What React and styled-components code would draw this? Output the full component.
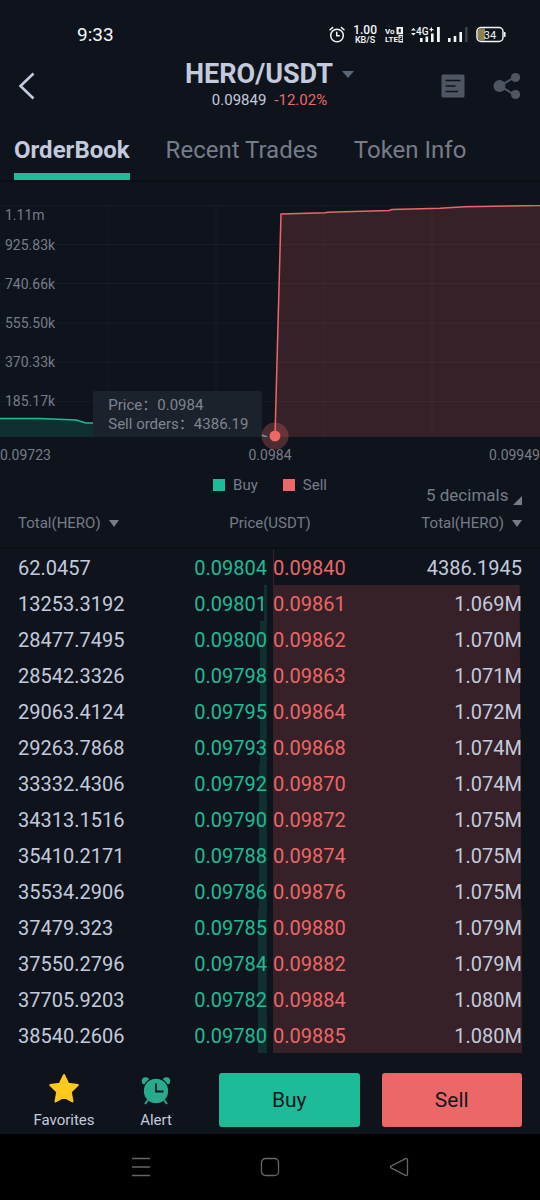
import React, { useState } from 'react';
import styled, { createGlobalStyle } from 'styled-components';

const GREEN = '#1dbb97';
const RED = '#ec6767';
const MUTED = '#767c88';
const LIGHT = '#c3cadd';
const BG = '#0f141c';

const GlobalStyle = createGlobalStyle`
  * {
    box-sizing: border-box;
  }

  body {
    margin: 0;
    background: #000;
    font-family: Roboto, 'Noto Sans CJK SC', sans-serif;
    color: ${LIGHT};
  }

  button, select {
    font-family: inherit;
    color: inherit;
    background: none;
    border: none;
    padding: 0;
    margin: 0;
    cursor: pointer;
  }

  svg {
    display: block;
  }
`;

const Page = styled.div`
  min-height: 100vh;
  display: flex;
  flex-direction: column;
  background: ${BG};
`;

const StatusBar = styled.div`
  display: flex;
  align-items: center;
  justify-content: space-between;
  height: 52px;
  padding: 17px 34px 0 77px;
  color: #f4f5f7;
`;

const Clock = styled.span`
  font-size: 19px;
  line-height: 20px;
`;

const StatusIcons = styled.div`
  display: flex;
  align-items: center;
  gap: 8px;
`;

const NetSpeed = styled.div`
  display: flex;
  flex-direction: column;
  align-items: center;
  font-size: 9px;
  font-weight: 500;
  line-height: 9px;

  b {
    font-size: 12px;
    font-weight: 500;
    line-height: 12px;
  }
`;

const Header = styled.header`
  display: grid;
  grid-template-columns: 1fr auto 1fr;
  align-items: center;
  height: 68px;
  padding: 0 19px 0 18px;
`;

const IconButton = styled.button`
  display: flex;
`;

const HeaderActions = styled.div`
  display: flex;
  align-items: center;
  justify-content: flex-end;
  gap: 28px;
`;

const Pair = styled.div`
  display: flex;
  flex-direction: column;
  align-items: center;
`;

const PairButton = styled.button`
  display: flex;
  align-items: center;
  gap: 9px;
  font-size: 27px;
  font-weight: 700;
  line-height: 28px;
`;

const PairPrice = styled.div`
  display: flex;
  gap: 8px;
  font-size: 15px;
  line-height: 24px;
`;

const Change = styled.span`
  color: ${RED};
`;

const Caret = styled.span`
  border-left: ${props => props.$size || 5}px solid transparent;
  border-right: ${props => props.$size || 5}px solid transparent;
  border-top: 7px solid ${props => props.$color || MUTED};
`;

const Tabs = styled.nav`
  display: flex;
  gap: 36px;
  padding: 0 14px;
  border-bottom: 2px solid #0b0e14;
`;

const Tab = styled.button`
  height: 60px;
  padding-top: 7px;
  border-bottom: 7px solid ${props => props.$active ? GREEN : 'transparent'};
  font-size: 24px;
  font-weight: ${props => props.$active ? 700 : 400};
  color: ${props => props.$active ? LIGHT : MUTED};
`;

const ChartSection = styled.section`
  padding-top: 23px;
`;

const Plot = styled.div`
  position: relative;
  height: 232px;

  > svg {
    width: 100%;
    height: 100%;
  }
`;

const YAxis = styled.ul`
  position: absolute;
  top: 0;
  left: 5px;
  margin: 0;
  padding: 0;
  list-style: none;
  font-size: 14px;
  color: ${MUTED};

  li {
    display: flex;
    align-items: center;
    height: 39px;
  }

  li:first-child {
    height: 20px;
  }
`;

const ChartTooltip = styled.div`
  position: absolute;
  right: calc(49% + 13px);
  bottom: 0;
  padding: 5px 14px 3px 15px;
  border-radius: 2px;
  background: #1b222b;
  font-size: 15px;
  line-height: 19px;
  white-space: nowrap;
  color: #7f858f;
`;

const Marker = styled.div`
  position: absolute;
  left: 51%;
  bottom: 1px;
  width: 27px;
  height: 27px;
  border: 8px solid rgba(236, 103, 103, 0.28);
  border-radius: 50%;
  background: ${RED};
  background-clip: padding-box;
  transform: translate(-50%, 50%);
`;

const XAxis = styled.div`
  display: flex;
  justify-content: space-between;
  padding-top: 8px;
  font-size: 14px;
  line-height: 20px;
  color: ${MUTED};
`;

const LegendRow = styled.div`
  display: grid;
  grid-template-columns: 1fr auto 1fr;
  height: 41px;
  padding: 10px 18px 0;
  color: ${MUTED};
`;

const Legend = styled.div`
  grid-column: 2;
  align-self: start;
  display: flex;
  gap: 25px;
`;

const LegendItem = styled.span`
  display: flex;
  align-items: center;
  gap: 8px;
  font-size: 15px;
  line-height: 20px;

  &::before {
    content: '';
    width: 12px;
    height: 12px;
    background: ${props => props.$color};
  }
`;

const Decimals = styled.label`
  align-self: end;
  justify-self: end;
  display: flex;
  align-items: flex-end;
  gap: 4px;
`;

const DecimalsSelect = styled.select`
  appearance: none;
  height: 22px;
  outline: none;
  font-size: 17px;
  line-height: 22px;
  color: ${MUTED};
`;

const Corner = styled.span`
  margin-bottom: 1px;
  border-left: 9px solid transparent;
  border-bottom: 9px solid ${MUTED};
`;

const ColumnHeads = styled.div`
  display: grid;
  grid-template-columns: 1fr auto 1fr;
  align-items: center;
  height: 43px;
  padding: 0 18px 7px;
  border-bottom: 2px solid #0b0e14;
  font-size: 15px;
  color: ${MUTED};
`;

const SortButton = styled.button`
  display: flex;
  align-items: center;
  gap: 8px;
  justify-self: ${props => props.$end ? 'end' : 'start'};
  font-size: 15px;
`;

const Books = styled.div`
  display: grid;
  grid-template-columns: 1fr 1fr;
  gap: 6px;
  padding: 0 18px;
`;

const Book = styled.table`
  width: 100%;
  align-self: start;
  border-collapse: collapse;
  font-size: 20px;
`;

const BookRow = styled.tr`
  height: 36px;
  background-image: linear-gradient(${props => props.$buy ? '#10302f, #10302f' : '#352127, #352127'});
  background-position: ${props => props.$buy ? 'right' : 'left'} top;
  background-repeat: no-repeat;
`;

const Total = styled.td`
  padding: 1px 0 0;
  text-align: ${props => props.$end ? 'right' : 'left'};
`;

const Price = styled.td`
  padding: 1px 0 0;
  color: ${props => props.$buy ? GREEN : RED};
  text-align: ${props => props.$buy ? 'right' : 'left'};
`;

const Footer = styled.footer`
  display: flex;
  align-items: flex-start;
  margin-top: auto;
  padding: 20px 18px 4px;
`;

const FooterLink = styled.button`
  display: flex;
  flex-direction: column;
  align-items: center;
  gap: 7px;
  width: 92px;
  font-size: 15px;
  line-height: 20px;
`;

const TradeButtons = styled.div`
  flex: 1;
  display: grid;
  grid-template-columns: 1fr 1fr;
  gap: 22px;
  padding-left: 17px;
`;

const TradeButton = styled.button`
  height: 54px;
  border-radius: 3px;
  background: ${props => props.$color};
  font-size: 21px;
  color: #14181d;
`;

const SystemNav = styled.nav`
  display: grid;
  grid-template-columns: repeat(3, 1fr);
  justify-items: center;
  align-items: center;
  height: 66px;
  padding: 0 76px;
  background: #000;
`;

const Y_LABELS = ['1.11m', '925.83k', '740.66k', '555.50k', '370.33k', '185.17k'];

const BIDS = [
  ['62.0457', '0.09804'],
  ['13253.3192', '0.09801'],
  ['28477.7495', '0.09800'],
  ['28542.3326', '0.09798'],
  ['29063.4124', '0.09795'],
  ['29263.7868', '0.09793'],
  ['33332.4306', '0.09792'],
  ['34313.1516', '0.09790'],
  ['35410.2171', '0.09788'],
  ['35534.2906', '0.09786'],
  ['37479.323', '0.09785'],
  ['37550.2796', '0.09784'],
  ['37705.9203', '0.09782'],
  ['38540.2606', '0.09780'],
];

const ASKS = [
  ['0.09840', '4386.1945'],
  ['0.09861', '1.069M'],
  ['0.09862', '1.070M'],
  ['0.09863', '1.071M'],
  ['0.09864', '1.072M'],
  ['0.09868', '1.074M'],
  ['0.09870', '1.074M'],
  ['0.09872', '1.075M'],
  ['0.09874', '1.075M'],
  ['0.09876', '1.075M'],
  ['0.09880', '1.079M'],
  ['0.09882', '1.079M'],
  ['0.09884', '1.080M'],
  ['0.09885', '1.080M'],
];

const MAX_TOTAL = 1080000;

const depth = (total) => {
  const value = parseFloat(total) * (total.endsWith('M') ? 1000000 : 1);
  return { backgroundSize: `${(value / MAX_TOTAL) * 100}% 100%` };
};

function AlarmIcon() {
  return (
    <svg width="16" height="17" viewBox="0 0 16 17" fill="none" stroke="#f4f5f7" strokeWidth="1.5" strokeLinecap="round">
      <circle cx="8" cy="9.5" r="6.3" />
      <path d="M7.7 6.2v3.6h2.6M1 3.8 3.6 1.6M15 3.8l-2.6-2.2" />
    </svg>
  );
}

function VolteIcon() {
  return (
    <svg width="18" height="17" viewBox="0 0 18 17" fill="#f4f5f7" fontSize="8" fontWeight="700">
      <text x="0" y="8">Vo</text>
      <text x="0" y="16">LTE</text>
      <path fillRule="evenodd" d="M11.5 1H18v7.2h-6.5zM13.6 2.8v3.6h2.2V2.8z" />
      <path fillRule="evenodd" d="M13.5 9H18v7.5h-4.5zM14.5 10.3v1h2v.8h-2v2.9h2.8v-1h-1.8v-.8h1.8v-2.9z" />
    </svg>
  );
}

function MobileSignal() {
  return (
    <svg width="29" height="17" viewBox="0 0 29 17" fill="#f4f5f7">
      <path d="M0 4.6 2.4 2l2.4 2.6zM0 7h4.8L2.4 9.6z" />
      <text x="5" y="9" fontSize="10" fontWeight="500">4G</text>
      <path d="M18.4 3h1.4V1.6H21V3h1.4v1.2H21v1.4h-1.2V4.2h-1.4z" />
      <path d="M9 12h2.6v4H9zM14.5 10.5h2.6V16h-2.6zM20 7.5h2.6V16H20zM26 1h2.8v15H26z" />
    </svg>
  );
}

function WeakSignal() {
  return (
    <svg width="20" height="17" viewBox="0 0 20 17" fill="#f4f5f7">
      <path d="M0 12h2.6v4H0zM5.7 10h2.6v6H5.7zM11.4 6H14v10h-2.6z" />
      <path d="M17 1h2.6v15H17z" fill="#3b3f47" />
    </svg>
  );
}

function Battery() {
  return (
    <svg width="30" height="17" viewBox="0 0 30 17">
      <path d="M5 2.5h4v12H5a3 3 0 0 1-3-3v-6a3 3 0 0 1 3-3z" fill="#8d8048" />
      <rect x="1" y="1.5" width="26" height="14" rx="4" fill="none" stroke="#f4f5f7" strokeWidth="1.5" />
      <path d="M28 6h.6a1 1 0 0 1 1 1v3a1 1 0 0 1-1 1H28z" fill="#f4f5f7" />
      <text x="14" y="12.5" fontSize="11" textAnchor="middle" fill="#f4f5f7">34</text>
    </svg>
  );
}

function DepthChart() {
  return (
    <svg viewBox="0 0 540 232" preserveAspectRatio="none" fill="none">
      <path d="M0 213.5H40L76 215 86 218H96L180 226 262 230 267 232H0z" fill="#10302f" />
      <path d="M275 232 281 9 325 7.8 328 7.2 389 5.5 392 4.5 440 3.3 465 1.7 540 .5V232z" fill="#352127" />
      <path
        d="M0 .5H540M0 39.5H540M0 78.5H540M0 118H540M0 157.5H540M0 196.5H540M108 0V232M216 0V232M324 0V232M432 0V232"
        stroke="#fff"
        strokeOpacity="0.03"
      />
      <path d="M0 213.5H40L76 215 86 218H96L180 226 262 230 267 232" stroke={GREEN} strokeWidth="1.5" />
      <path d="M275 231 281 9 325 7.8 328 7.2 389 5.5 392 4.5 440 3.3 465 1.7 540 .5" stroke={RED} strokeWidth="1.5" />
    </svg>
  );
}

function App() {
  const [tab, setTab] = useState('OrderBook');
  const [decimals, setDecimals] = useState('5');

  return (
    <Page>
      <GlobalStyle />
      <StatusBar>
        <Clock>9:33</Clock>
        <StatusIcons>
          <AlarmIcon />
          <NetSpeed><b>1.00</b>KB/S</NetSpeed>
          <VolteIcon />
          <MobileSignal />
          <WeakSignal />
          <Battery />
        </StatusIcons>
      </StatusBar>

      <Header>
        <IconButton aria-label="Back">
          <svg width="17" height="28" viewBox="0 0 17 28" fill="none" stroke={LIGHT} strokeWidth="2.6">
            <path d="M15.5 1.5 2.5 14l13 12.5" />
          </svg>
        </IconButton>
        <Pair>
          <PairButton>
            HERO/USDT
            <Caret $size={6} $color="#5a6673" />
          </PairButton>
          <PairPrice>
            <span>0.09849</span>
            <Change>-12.02%</Change>
          </PairPrice>
        </Pair>
        <HeaderActions>
          <IconButton aria-label="Orders">
            <svg width="24" height="24" viewBox="0 0 24 24">
              <rect x="0.5" y="0.5" width="23" height="23" rx="1.5" fill="#4f5662" />
              <path d="M4.5 6.5h15M4.5 12h10M4.5 17.5h12.5" stroke={BG} strokeWidth="1.6" />
            </svg>
          </IconButton>
          <IconButton aria-label="Share">
            <svg width="28" height="28" viewBox="0 0 28 28" fill="#4f5662">
              <path d="M22 5 7 14l15 9" fill="none" stroke="#4f5662" strokeWidth="2" />
              <circle cx="6.5" cy="14" r="6" />
              <circle cx="22.5" cy="5.5" r="4.6" />
              <circle cx="22.5" cy="22.5" r="4.6" />
            </svg>
          </IconButton>
        </HeaderActions>
      </Header>

      <Tabs>
        {['OrderBook', 'Recent Trades', 'Token Info'].map(name => (
          <Tab key={name} $active={tab === name} onClick={() => setTab(name)}>{name}</Tab>
        ))}
      </Tabs>

      <ChartSection>
        <Plot>
          <DepthChart />
          <YAxis>
            {Y_LABELS.map(label => <li key={label}>{label}</li>)}
          </YAxis>
          <ChartTooltip>
            <div>Price：0.0984</div>
            <div>Sell orders：4386.19</div>
          </ChartTooltip>
          <Marker />
        </Plot>
        <XAxis>
          <span>0.09723</span>
          <span>0.0984</span>
          <span>0.09949</span>
        </XAxis>
      </ChartSection>

      <LegendRow>
        <Legend>
          <LegendItem $color={GREEN}>Buy</LegendItem>
          <LegendItem $color={RED}>Sell</LegendItem>
        </Legend>
        <Decimals>
          <DecimalsSelect
            aria-label="Price precision"
            value={decimals}
            onChange={(e) => setDecimals(e.target.value)}
          >
            <option value="5">5 decimals</option>
            <option value="4">4 decimals</option>
            <option value="3">3 decimals</option>
          </DecimalsSelect>
          <Corner />
        </Decimals>
      </LegendRow>

      <ColumnHeads>
        <SortButton>Total(HERO)<Caret /></SortButton>
        <span>Price(USDT)</span>
        <SortButton $end>Total(HERO)<Caret /></SortButton>
      </ColumnHeads>

      <Books>
        <Book aria-label="Buy orders">
          <tbody>
            {BIDS.map(([total, price]) => (
              <BookRow key={price} $buy style={depth(total)}>
                <Total>{total}</Total>
                <Price $buy>{price}</Price>
              </BookRow>
            ))}
          </tbody>
        </Book>
        <Book aria-label="Sell orders">
          <tbody>
            {ASKS.map(([price, total]) => (
              <BookRow key={price} style={depth(total)}>
                <Price>{price}</Price>
                <Total $end>{total}</Total>
              </BookRow>
            ))}
          </tbody>
        </Book>
      </Books>

      <Footer>
        <FooterLink>
          <svg width="32" height="30" viewBox="0 0 32 30">
            <path
              d="M16 2l4.2 8.8 9.6 1.3-7 6.7 1.7 9.6L16 23.8l-8.5 4.6 1.7-9.6-7-6.7 9.6-1.3z"
              fill="#fcc91c"
              stroke="#fcc91c"
              strokeWidth="2"
              strokeLinejoin="round"
            />
          </svg>
          Favorites
        </FooterLink>
        <FooterLink>
          <svg width="30" height="30" viewBox="0 0 30 30" overflow="visible" fill="#27ab8c">
            <circle cx="4.6" cy="8" r="3.8" />
            <circle cx="25.4" cy="8" r="3.8" />
            <circle cx="15" cy="18" r="12.8" stroke={BG} strokeWidth="1.2" />
            <path d="M7 27 4 31M23 27l3 4" stroke="#27ab8c" strokeWidth="2" />
            <path d="M15 10.5V18.5h7.5" fill="none" stroke={BG} strokeWidth="1.8" />
          </svg>
          Alert
        </FooterLink>
        <TradeButtons>
          <TradeButton $color={GREEN}>Buy</TradeButton>
          <TradeButton $color={RED}>Sell</TradeButton>
        </TradeButtons>
      </Footer>

      <SystemNav>
        <IconButton aria-label="Recent apps">
          <svg width="20" height="20" viewBox="0 0 20 20" stroke="#666" strokeWidth="1.3">
            <path d="M1 1.5h18M1 10h18M1 18.5h18" />
          </svg>
        </IconButton>
        <IconButton aria-label="Home">
          <svg width="20" height="20" viewBox="0 0 20 20" fill="none" stroke="#666" strokeWidth="1.3">
            <rect x="1.5" y="1.5" width="17" height="17" rx="4" />
          </svg>
        </IconButton>
        <IconButton aria-label="Go back">
          <svg width="20" height="20" viewBox="0 0 20 20" fill="none" stroke="#666" strokeWidth="1.3" strokeLinejoin="round">
            <path d="M16.6 1.7 2 9.2a.9.9 0 0 0 0 1.6l14.6 7.5a1.2 1.2 0 0 0 1.9-1V2.7a1.2 1.2 0 0 0-1.9-1z" />
          </svg>
        </IconButton>
      </SystemNav>
    </Page>
  );
}

export default App;
